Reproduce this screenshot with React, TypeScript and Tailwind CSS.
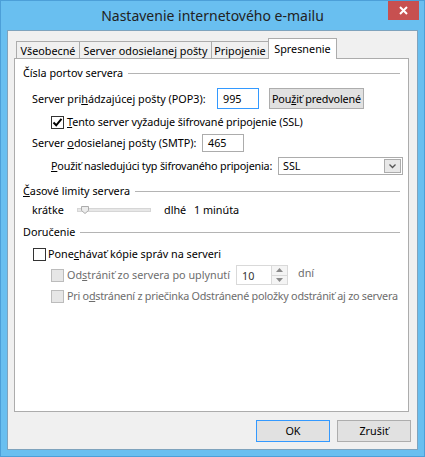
import type { ReactNode } from "react";

function Check({ checked = false, disabled = false }: { checked?: boolean; disabled?: boolean }) {
  return (
    <span
      className={`flex h-[13px] w-[13px] shrink-0 items-center justify-center border ${
        disabled ? "border-[#bcbcbc] bg-[#e6e6e6]" : "border-[#333333] bg-white"
      }`}
    >
      {checked && (
        <svg width="11" height="11" viewBox="0 0 11 11">
          <path d="M1.5 5.5 L4.2 8.3 L9.5 1.8" fill="none" stroke="#000" strokeWidth="2" />
        </svg>
      )}
    </span>
  );
}

function SectionHead({ children }: { children: ReactNode }) {
  return (
    <div className="flex h-[14px] items-center pl-[8px]">
      <span>{children}</span>
      <div className="ml-[5px] h-px flex-1 bg-[#b4b4b4]" />
    </div>
  );
}

function Tab({ label, width, active = false, last = false }: { label: string; width: string; active?: boolean; last?: boolean }) {
  if (active) {
    return (
      <div
        className={`relative z-10 -mb-px flex h-[21px] shrink-0 items-start justify-center border border-b-0 border-[#acacac] bg-white pt-[3px] ${width}`}
      >
        {label}
      </div>
    );
  }
  return (
    <div
      className={`flex h-[17px] shrink-0 items-center justify-center border-t border-l border-[#acacac] bg-[#f0f0f0] pt-[1px] ${
        last ? "border-r" : ""
      } ${width}`}
    >
      {label}
    </div>
  );
}

export default function App() {
  return (
    <div className="flex h-[457px] w-[425px] flex-col border border-[#4c9fd8] bg-[#69bff0] font-['Noto_Sans',sans-serif] text-[10.8px] leading-[14px] whitespace-nowrap text-black">
      {/* Title bar */}
      <div className="grid h-[29px] grid-cols-[1fr_auto_1fr]">
        <div />
        <div className="flex items-center pt-[1px] text-[14px] text-[#222]">Nastavenie internetového e-mailu</div>
        <div className="flex items-start justify-end pr-[5px]">
          <button className="flex h-[19px] w-[31px] items-center justify-center bg-[#c75050]">
            <svg width="9" height="9" viewBox="0 0 9 9">
              <path d="M1 1 L8 8 M8 1 L1 8" stroke="#fff" strokeWidth="2" />
            </svg>
          </button>
        </div>
      </div>

      {/* Client */}
      <div className="mx-[6px] flex h-[420px] flex-col border border-[#7fa3bd] bg-[#f0f0f0] pt-[7px] pb-[7px]">
        {/* Tabs */}
        <div className="ml-[8px] flex h-[20px] items-end">
          <Tab label="Všeobecné" width="w-[63px]" />
          <Tab label="Server odosielanej pošty" width="w-[132px]" />
          <Tab label="Pripojenie" width="w-[57px]" />
          <Tab label="Spresnenie" width="w-[69px]" active />
        </div>

        {/* Panel */}
        <div className="mr-[8px] ml-[6px] flex h-[354px] flex-col border border-[#acacac] bg-white pt-[7px] pr-[8px]">
          <SectionHead>Čísla portov servera</SectionHead>

          <div className="mt-[8px] flex h-[21px] items-center pl-[17px]">
            <span className="w-[185px] shrink-0">
              Server pri<u>h</u>ádzajúcej pošty (POP3):
            </span>
            <div className="flex h-[21px] w-[42px] shrink-0 items-center border border-[#3399ff] px-[5px]">995</div>
            <button className="ml-[10px] flex h-[21px] w-[95px] shrink-0 items-center justify-center border border-[#adadad] bg-[#e1e1e1] tracking-[-0.15px]">
              Pou<u>ž</u>iť predvolené
            </button>
          </div>

          <div className="mt-[6px] flex h-[14px] items-center pl-[36px]">
            <Check checked />
            <span className="ml-[3px] tracking-[-0.1px]">
              <u>T</u>ento server vyžaduje šifrované pripojenie (SSL)
            </span>
          </div>

          <div className="mt-[5px] flex h-[18px] items-center pl-[17px]">
            <span className="w-[170px] shrink-0">
              Server <u>o</u>dosielanej pošty (SMTP):
            </span>
            <div className="flex h-[18px] w-[42px] shrink-0 items-center border border-[#acacac] px-[5px]">465</div>
          </div>

          <div className="mt-[5px] flex h-[18px] items-center pl-[36px]">
            <span className="w-[227px] shrink-0 tracking-[-0.2px]">
              <u>P</u>oužiť nasledujúci typ šifrovaného pripojenia:
            </span>
            <div className="flex h-[18px] w-[125px] shrink-0 items-center border border-[#acacac] bg-white pr-[1px] pl-[4px]">
              <span className="flex-1">SSL</span>
              <span className="flex h-[14px] w-[17px] items-center justify-center border border-[#acacac] bg-[#e8e8e8]">
                <svg width="7" height="5" viewBox="0 0 7 5">
                  <path d="M0.5 0.5 L3.5 3.5 L6.5 0.5" fill="none" stroke="#555" strokeWidth="1.3" />
                </svg>
              </span>
            </div>
          </div>

          <div className="mt-[9px]">
            <SectionHead>
              <u>Č</u>asové limity servera
            </SectionHead>
          </div>

          <div className="mt-[5px] flex h-[14px] items-center pl-[17px]">
            <span className="w-[45px] shrink-0">krátke</span>
            <div className="flex w-[74px] shrink-0 items-center">
              <div className="flex h-[4px] w-full items-center border border-[#d6d6d6] bg-[#e7e7e7] pl-[3px]">
                <svg width="8" height="8" viewBox="0 0 8 8" className="shrink-0">
                  <path d="M0.5 0.5 H7.5 V4.5 L4 7.5 L0.5 4.5 Z" fill="#ececec" stroke="#acacac" />
                </svg>
              </div>
            </div>
            <span className="ml-[13px] w-[30px] shrink-0">dlhé</span>
            <span>1 minúta</span>
          </div>

          <div className="mt-[8px]">
            <SectionHead>Doručenie</SectionHead>
          </div>

          <div className="mt-[8px] flex h-[14px] items-center pl-[18px]">
            <Check />
            <span className="ml-[2px]">
              Pone<u>c</u>hávať kópie správ na serveri
            </span>
          </div>

          <div className="mt-[4px] flex h-[20px] items-center pl-[36px] text-[#6d6d6d]">
            <Check disabled />
            <span className="ml-[3px] w-[169px] shrink-0">
              Od<u>s</u>trániť zo servera po uplynutí
            </span>
            <div className="flex h-[20px] w-[52px] shrink-0 items-center border border-[#d9d9d9] bg-white pl-[5px] text-[#333]">
              <span className="flex-1 pt-[2px]">10</span>
              <div className="flex h-full w-[16px] flex-col border-l border-[#d9d9d9]">
                <span className="flex flex-1 items-center justify-center border-b border-[#d9d9d9] bg-[#f4f4f4]">
                  <svg width="7" height="4" viewBox="0 0 7 4">
                    <path d="M0 4 L3.5 0 L7 4 Z" fill="#8a8a8a" />
                  </svg>
                </span>
                <span className="flex flex-1 items-center justify-center bg-[#f4f4f4]">
                  <svg width="7" height="4" viewBox="0 0 7 4">
                    <path d="M0 0 L3.5 4 L7 0 Z" fill="#8a8a8a" />
                  </svg>
                </span>
              </div>
            </div>
            <span className="ml-[10px] -mt-[4px]">dní</span>
          </div>

          <div className="mt-[4px] flex h-[14px] items-center pl-[36px] text-[#6d6d6d]">
            <Check disabled />
            <span className="ml-[3px] tracking-[-0.25px]">
              Pri o<u>d</u>stránení z priečinka Odstránené položky odstrániť aj zo servera
            </span>
          </div>
        </div>

        {/* Buttons */}
        <div className="mt-[8px] mr-[6px] flex justify-end gap-[7px]">
          <button className="flex h-[22px] w-[74px] items-center justify-center border border-[#3399ff] bg-[#e1e1e1]">OK</button>
          <button className="flex h-[22px] w-[74px] items-center justify-center border border-[#adadad] bg-[#e1e1e1]">Zrušiť</button>
        </div>
      </div>
    </div>
  );
}
